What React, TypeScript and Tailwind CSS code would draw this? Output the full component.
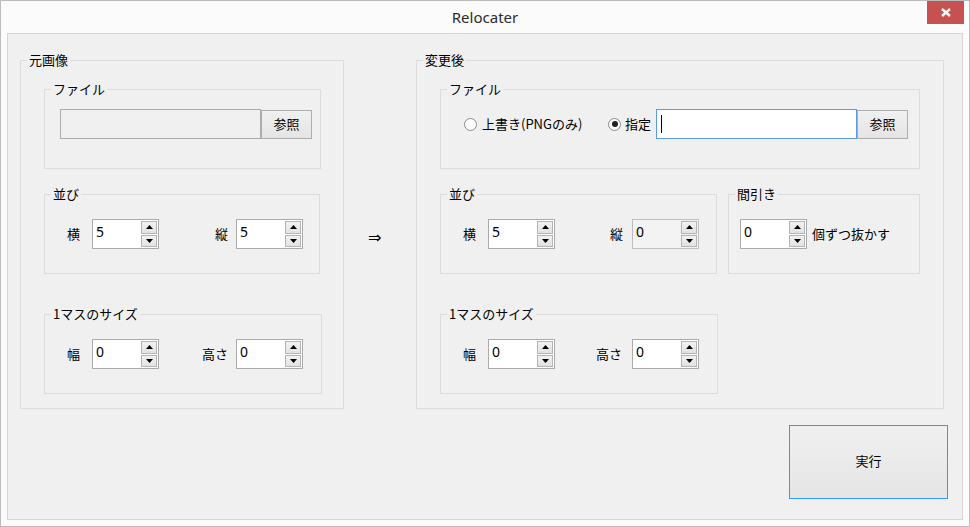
import type { ReactNode } from "react";

const jp = "font-['Meiryo_UI','Noto_Sans_CJK_JP',sans-serif]";

function Group({ label, className, children }: { label: string; className: string; children?: ReactNode }) {
  return (
    <div className={`border border-[#dcdcdc] ${className}`}>
      <div className="-mt-[9px] ml-[6px] w-fit px-[2px] bg-[#f0f0f0] text-[13px] leading-[16px] text-black">
        {label}
      </div>
      {children}
    </div>
  );
}

function Arrow({ up }: { up?: boolean }) {
  return (
    <div className="flex-1 flex items-center justify-center border border-[#b4b4b4] bg-gradient-to-b from-[#f2f2f2] to-[#e2e2e2]">
      <svg width="7" height="4" viewBox="0 0 7 4">
        {up ? <path d="M0 4h7L3.5 0z" fill="#000" /> : <path d="M0 0h7L3.5 4z" fill="#000" />}
      </svg>
    </div>
  );
}

function Spinner({ value, disabled }: { value: string; disabled?: boolean }) {
  return (
    <div
      className={`w-[67px] h-[30px] flex border ${
        disabled ? "border-[#bfbfbf] bg-[#f3f3f3]" : "border-[#ababab] bg-white"
      }`}
    >
      <div className="flex-1 pl-[3px] pt-[4px] text-[14px] leading-[16px] font-['Segoe_UI','Noto_Sans',sans-serif]">
        {value}
      </div>
      <div className="w-[17px] flex flex-col gap-[1px] py-[1px] pr-[1px]">
        <Arrow up />
        <Arrow />
      </div>
    </div>
  );
}

function Radio({ checked }: { checked?: boolean }) {
  return (
    <div className="w-[13px] h-[13px] rounded-full border border-[#8a8a8a] bg-white flex items-center justify-center">
      {checked && <div className="w-[6px] h-[6px] rounded-full bg-[#222]" />}
    </div>
  );
}

function BrowseButton() {
  return (
    <div className="w-[51px] h-[29px] border border-[#adadad] bg-gradient-to-b from-[#f0f0f0] to-[#e5e5e5] flex items-center justify-center text-[13px]">
      参照
    </div>
  );
}

export default function App() {
  return (
    <div className={`w-[970px] h-[527px] border border-[#bcbcbc] bg-[#fbfbfb] flex flex-col text-black ${jp}`}>
      {/* Title bar */}
      <div className="h-[32px] grid grid-cols-[1fr_auto_1fr]">
        <div />
        <div className="pt-[6px] text-[15px] leading-[20px] text-[#2b2b2b] font-['Segoe_UI','Noto_Sans',sans-serif]">
          Relocater
        </div>
        <div className="flex justify-end pr-[5px]">
          <div className="w-[37px] h-[23px] bg-[#c75050] flex items-center justify-center">
            <svg width="10" height="9" viewBox="0 0 10 9">
              <path d="M1 1l8 7M9 1L1 8" stroke="#fff" strokeWidth="2.4" />
            </svg>
          </div>
        </div>
      </div>

      {/* Client area */}
      <div className="mx-[6px] h-[487px] border border-[#d5d5d5] bg-[#f0f0f0] flex flex-col">
        <div className="mt-[26px] pl-[12px] flex">
          {/* 元画像 */}
          <Group label="元画像" className="w-[324px] h-[349px]">
            <Group label="ファイル" className="mt-[21px] ml-[23px] w-[277px] h-[80px]">
              <div className="mt-[12px] ml-[15px] flex items-center">
                <div className="w-[201px] h-[30px] border border-[#ababab] bg-[#f0f0f0]" />
                <BrowseButton />
              </div>
            </Group>
            <Group label="並び" className="mt-[25px] ml-[23px] w-[276px] h-[80px]">
              <div className="mt-[17px] ml-[22px] flex items-center text-[13px]">
                <span className="w-[25px]">横</span>
                <Spinner value="5" />
                <span className="ml-[56px] w-[21px]">縦</span>
                <Spinner value="5" />
              </div>
            </Group>
            <Group label="1マスのサイズ" className="mt-[40px] ml-[23px] w-[278px] h-[80px]">
              <div className="mt-[17px] ml-[22px] flex items-center text-[13px]">
                <span className="w-[25px]">幅</span>
                <Spinner value="0" />
                <span className="ml-[43px] w-[34px]">高さ</span>
                <Spinner value="0" />
              </div>
            </Group>
          </Group>

          {/* arrow */}
          <div className="w-[72px] pl-[24px] pt-[170px] text-[16px] leading-[16px] font-['DejaVu_Sans',sans-serif]">⇒</div>

          {/* 変更後 */}
          <Group label="変更後" className="w-[528px] h-[349px]">
            <Group label="ファイル" className="mt-[21px] ml-[23px] w-[480px] h-[80px]">
              <div className="mt-[12px] ml-[23px] flex items-center text-[13px]">
                <Radio />
                <span className="ml-[5px] w-[126px]">上書き(PNGのみ)</span>
                <Radio checked />
                <span className="ml-[4px] w-[31px]">指定</span>
                <div className="w-[201px] h-[30px] border border-[#569de5] bg-white flex items-center pl-[4px]">
                  <div className="w-[1px] h-[18px] bg-black" />
                </div>
                <BrowseButton />
              </div>
            </Group>
            <div className="mt-[25px] ml-[23px] flex">
              <Group label="並び" className="w-[277px] h-[80px]">
                <div className="mt-[17px] ml-[22px] flex items-center text-[13px]">
                  <span className="w-[25px]">横</span>
                  <Spinner value="5" />
                  <span className="ml-[55px] w-[22px]">縦</span>
                  <Spinner value="0" disabled />
                </div>
              </Group>
              <Group label="間引き" className="ml-[11px] w-[192px] h-[80px]">
                <div className="mt-[17px] ml-[11px] flex items-center text-[13px]">
                  <Spinner value="0" />
                  <span className="ml-[5px]">個ずつ抜かす</span>
                </div>
              </Group>
            </div>
            <Group label="1マスのサイズ" className="mt-[40px] ml-[23px] w-[278px] h-[80px]">
              <div className="mt-[17px] ml-[22px] flex items-center text-[13px]">
                <span className="w-[25px]">幅</span>
                <Spinner value="0" />
                <span className="ml-[41px] w-[36px]">高さ</span>
                <Spinner value="0" />
              </div>
            </Group>
          </Group>
        </div>

        <div className="mt-[16px] flex justify-end pr-[14px]">
          <div className="w-[159px] h-[74px] border border-[#3399ff] bg-gradient-to-b from-[#f0f0f0] to-[#e5e5e5] flex items-center justify-center pb-[2px] text-[13px]">
            実行
          </div>
        </div>
      </div>
    </div>
  );
}
